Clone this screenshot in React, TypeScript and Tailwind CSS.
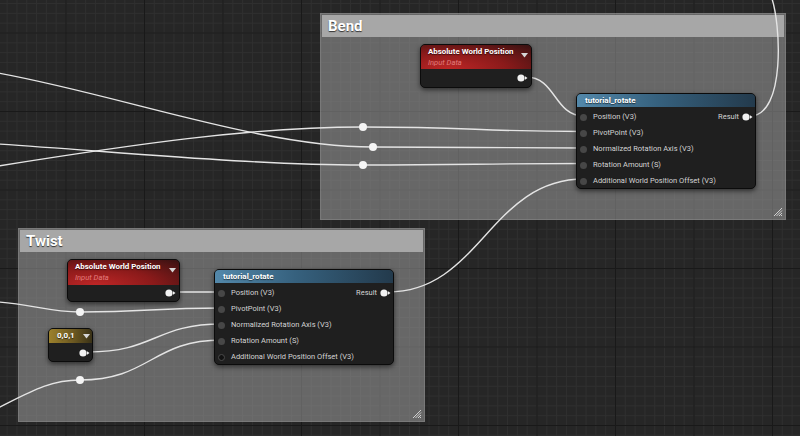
import React from 'react';

// Unreal-style material graph: two comment boxes with rotate function nodes.

function InPin({ hollow = false }: { hollow?: boolean }) {
  return (
    <span
      className={`block h-[7px] w-[7px] shrink-0 rounded-full ${
        hollow ? 'border border-[#4a4a4a] bg-[#121212]' : 'bg-[#474747]'
      }`}
    />
  );
}

function OutPin() {
  return (
    <svg width="11" height="8" viewBox="0 0 11 8" className="block shrink-0">
      <circle cx="4" cy="4" r="3.6" fill="#f2f2f2" />
      <polygon points="8,2.3 10.5,4 8,5.7" fill="#f2f2f2" />
    </svg>
  );
}

function DropArrow() {
  return (
    <svg width="7" height="5" viewBox="0 0 7 5" className="block">
      <polygon points="0,0 7,0 3.5,4.5" fill="#d6d6d6" />
    </svg>
  );
}

function ResizeGrip() {
  return (
    <svg width="10" height="10" viewBox="0 0 10 10" className="absolute bottom-[2px] right-[2px]">
      <path d="M9 1 L1 9 M9 3.5 L3.5 9 M9 6 L6 9 M9 8 L8 9" stroke="#d0d0d0" strokeWidth="1" />
    </svg>
  );
}

function Comment({ className, title }: { className: string; title: string }) {
  return (
    <div className={`absolute border border-[#8a8a8a]/50 bg-[#a3a3a3]/[0.52] p-[1px] ${className}`}>
      <div className="flex h-[22px] items-center bg-[#a7a7a7] pl-[6px] text-[15px] font-bold text-white [text-shadow:0_1px_1px_rgba(0,0,0,0.7)]">
        {title}
      </div>
      <ResizeGrip />
    </div>
  );
}

const rows = [
  'Position (V3)',
  'PivotPoint (V3)',
  'Normalized Rotation Axis (V3)',
  'Rotation Amount (S)',
  'Additional World Position Offset (V3)',
];

function RotateNode({ className, hollowLast = false }: { className: string; hollowLast?: boolean }) {
  return (
    <div
      className={`absolute h-[96px] w-[180px] rounded-[5px] border border-[#0b0b0b] bg-[#1f1f1f] shadow-[0_2px_5px_rgba(0,0,0,0.55)] ${className}`}
    >
      <div className="h-[13px] rounded-t-[4px] bg-[linear-gradient(to_right,#5388aa,#36617e_45%,#233a4c)] pl-[8px] text-[8px] font-bold leading-[13px] text-white [text-shadow:0_1px_1px_rgba(0,0,0,0.6)]">
        tutorial_rotate
      </div>
      <div className="flex flex-col pt-[2px]">
        {rows.map((label, i) => (
          <div key={label} className="flex h-[16px] items-center pl-[3px] pr-[2px]">
            <InPin hollow={hollowLast && i === rows.length - 1} />
            <span className="ml-[6px] text-[7.5px] text-[#d4d4d4]">{label}</span>
            {i === 0 && (
              <span className="ml-auto flex items-center gap-[3px] text-[7.5px] text-[#d4d4d4]">
                Result
                <OutPin />
              </span>
            )}
          </div>
        ))}
      </div>
    </div>
  );
}

function WorldPosNode({ className, headerH, bodyH }: { className: string; headerH: string; bodyH: string }) {
  return (
    <div
      className={`absolute rounded-[5px] border border-[#0b0b0b] bg-[#1f1f1f] shadow-[0_2px_5px_rgba(0,0,0,0.55)] ${className}`}
    >
      <div
        className={`relative rounded-t-[4px] bg-[radial-gradient(ellipse_at_25%_100%,#be2626,#8a1a1a_50%,#361111)] pl-[7px] pt-[1px] ${headerH}`}
      >
        <div className="text-[7.9px] font-bold leading-[11px] text-white [text-shadow:0_1px_1px_rgba(0,0,0,0.6)]">
          Absolute World Position
        </div>
        <div className="text-[7.6px] italic leading-[11px] text-[#e27c7c]">Input Data</div>
        <div className="absolute right-[3px] top-[8px]">
          <DropArrow />
        </div>
      </div>
      <div className={`flex items-center justify-end pr-[3px] ${bodyH}`}>
        <OutPin />
      </div>
    </div>
  );
}

function ConstNode() {
  return (
    <div className="absolute left-[48px] top-[328px] h-[34px] w-[45px] rounded-[5px] border border-[#0b0b0b] bg-[#1f1f1f] shadow-[0_2px_5px_rgba(0,0,0,0.55)]">
      <div className="flex h-[14px] items-center justify-between rounded-t-[4px] bg-[linear-gradient(to_right,#9c812c,#6e5a22_55%,#3a3217)] pl-[8px] pr-[2px]">
        <span className="text-[8px] font-bold text-white [text-shadow:0_1px_1px_rgba(0,0,0,0.6)]">0,0,1</span>
        <DropArrow />
      </div>
      <div className="flex h-[19px] items-center justify-end pr-[2px]">
        <OutPin />
      </div>
    </div>
  );
}

const wires = [
  'M750 116 C786 116 781 22 771 -4',
  'M526 77 C556 77 554 116 584 116',
  'M-2 73 C120 95 260 147 373 147',
  'M-2 144 C120 152 250 165 363 165',
  'M-2 166 C130 145 250 127 363 127',
  'M363 127 C470 127 480 131.5 584 131.5',
  'M373 147 C470 147 480 148 584 148',
  'M363 165 C470 165 480 163.5 584 163.5',
  'M388 292 C480 292 490 179 584 179',
  'M174 292 L222 292',
  'M-2 302 C30 304 50 312 80 312',
  'M80 312 C150 312 150 308 222 308',
  'M88 352 C155 352 155 324 222 324',
  'M-2 408 C30 392 50 380 80 380',
  'M80 380 C150 380 152 340 222 340',
];

const knots: [number, number][] = [
  [363, 127],
  [373, 147],
  [363, 165],
  [80, 312],
  [80, 380],
];

export default function App() {
  return (
    <div className="relative h-[436px] w-[800px] overflow-hidden bg-[#262626] font-[Roboto,sans-serif]">
      <svg width="800" height="436" className="absolute inset-0" shapeRendering="crispEdges">
        <defs>
          <pattern id="minor" x="65.5" y="32.5" width="9.8125" height="9.8125" patternUnits="userSpaceOnUse">
            <path d="M0 0 V9.8125 M0 0 H9.8125" stroke="#2f2f2f" strokeWidth="1" fill="none" />
          </pattern>
          <pattern id="major" x="65.5" y="32.5" width="78.5" height="78.5" patternUnits="userSpaceOnUse">
            <path d="M0 0 V78.5 M0 0 H78.5" stroke="#191919" strokeWidth="1" fill="none" />
          </pattern>
        </defs>
        <rect width="800" height="436" fill="url(#minor)" />
        <rect width="800" height="436" fill="url(#major)" />
      </svg>

      <Comment className="left-[320px] top-[13px] h-[207px] w-[466px]" title="Bend" />
      <Comment className="left-[18px] top-[228px] h-[194px] w-[407px]" title="Twist" />

      <svg width="800" height="436" className="absolute inset-0">
        {wires.map((d) => (
          <path key={d} d={d} stroke="#e4e4e4" strokeWidth="1.4" fill="none" />
        ))}
        {knots.map(([x, y]) => (
          <circle key={`${x}-${y}`} cx={x} cy={y} r="4" fill="#f4f4f4" />
        ))}
      </svg>

      <WorldPosNode className="left-[420px] top-[44px] w-[112px]" headerH="h-[24px]" bodyH="h-[18px]" />
      <RotateNode className="left-[576px] top-[93px]" />

      <WorldPosNode className="left-[67px] top-[259px] w-[113px]" headerH="h-[25px]" bodyH="h-[16px]" />
      <ConstNode />
      <RotateNode className="left-[214px] top-[269px]" hollowLast />
    </div>
  );
}
